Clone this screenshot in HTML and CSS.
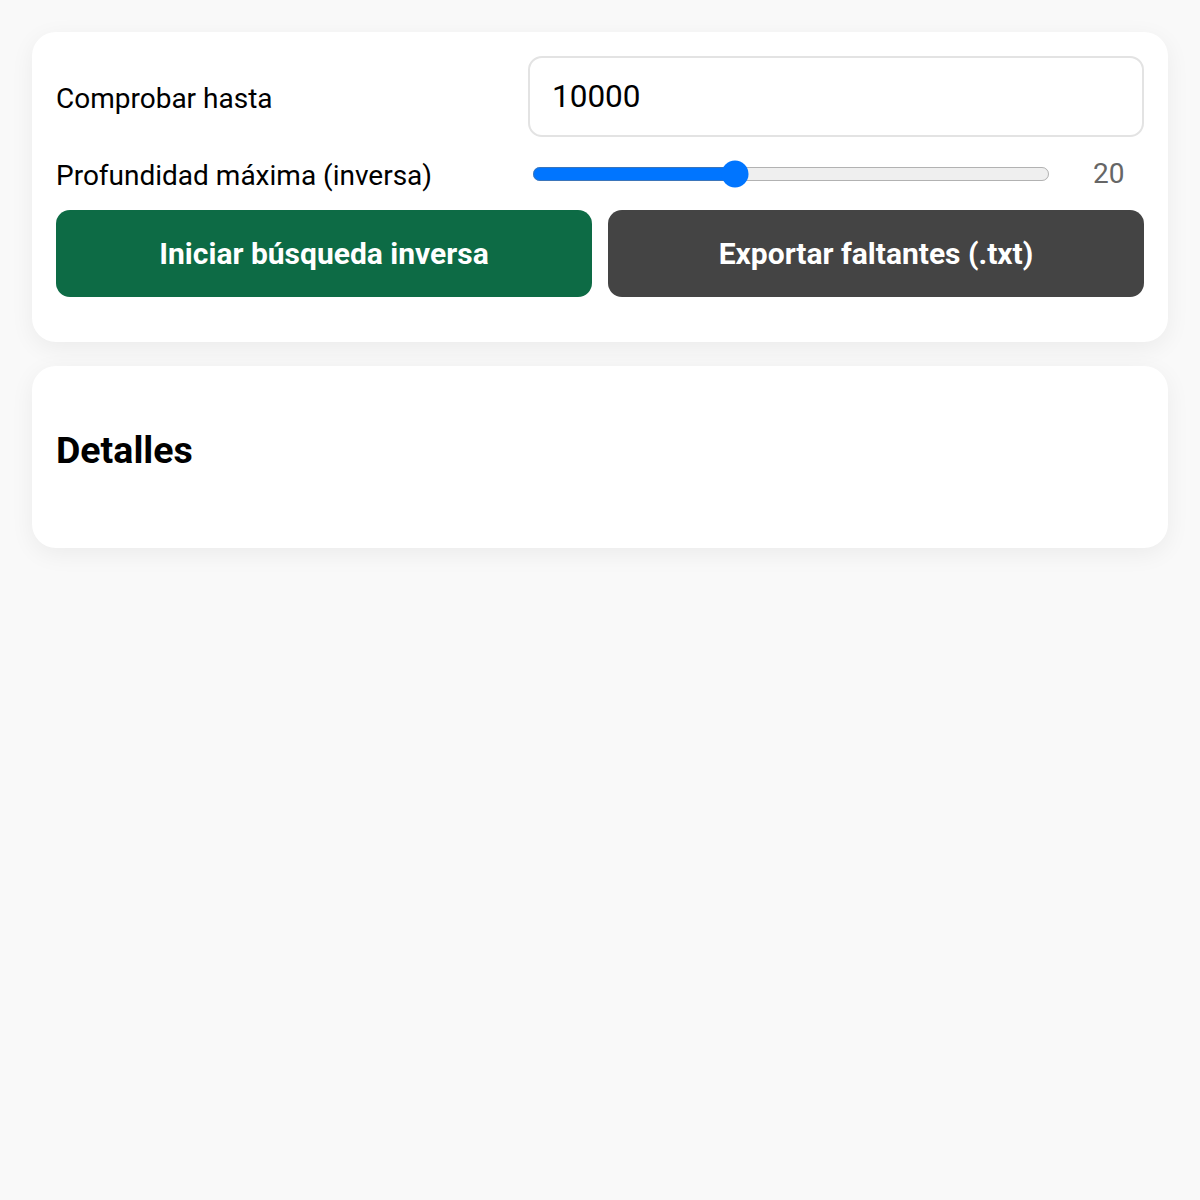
FILE: index.html
```html
<!DOCTYPE html>
<html lang="es">
  <head>
    <title>Búsqueda inversa</title>
    <meta charset="utf-8" />
    <link rel="stylesheet" href="styles.css">
  </head>
  <body>
    <div class="card controls">
      <div class="form">
        <label for="limit">Comprobar hasta</label>
        <input id="limit" class="field" type="number" value="10000" />

        <label for="depth">Profundidad máxima (inversa)</label>
        <div class="range-row">
          <input id="depth" class="range" type="range" min="1" max="50" value="20" />
          <span class="range-value">20</span>
        </div>
      </div>

      <div class="actions">
        <button class="btn btn-start">Iniciar búsqueda inversa</button>
        <button class="btn btn-export">Exportar faltantes (.txt)</button>
      </div>
    </div>

    <div class="card details">
      <h2>Detalles</h2>
      <div id="output"></div>
    </div>
  </body>
</html>
```

FILE: styles.css
```css
body {
  margin: 0;
  padding: 32px;
  background-color: #f9f9f9;
  color: #000;
  font-family: Roboto, "Noto Sans", sans-serif;
  font-size: 28px;
}

.card {
  background: #fff;
  border-radius: 24px;
  box-shadow: 0 6px 24px rgba(0, 0, 0, 0.06);
  padding: 24px;
}

.controls {
  padding-bottom: 45px;
}

.details {
  margin-top: 24px;
}

.form {
  display: grid;
  grid-template-columns: 456px 1fr;
  column-gap: 16px;
  row-gap: 16px;
  align-items: center;
}

.form label {
  padding-top: 3px;
}

.field {
  box-sizing: border-box;
  height: 81px;
  width: 100%;
  margin: 0;
  padding: 0 22px;
  border: 2px solid #e3e3e3;
  border-radius: 14px;
  font-family: Roboto, sans-serif;
  font-size: 31.5px;
  color: #000;
  outline: none;
  -moz-appearance: textfield;
}

.field::-webkit-inner-spin-button,
.field::-webkit-outer-spin-button {
  -webkit-appearance: none;
  margin: 0;
}

.range-row {
  display: flex;
  align-items: center;
  height: 41px;
}

.range {
  zoom: 1.75;
  flex: 1;
  min-width: 0;
}

.range-value {
  width: 51px;
  margin-left: 40px;
  color: #666;
}

.actions {
  display: grid;
  grid-template-columns: 1fr 1fr;
  gap: 16px;
  margin-top: 16px;
}

.btn {
  height: 87px;
  border: 0;
  border-radius: 14px;
  color: #fff;
  font-family: Roboto, sans-serif;
  font-size: 30px;
  font-weight: 700;
  cursor: pointer;
}

.btn-start {
  background: #0d6b45;
}

.btn-export {
  background: #444;
}

h2 {
  margin: 39px 0 0;
  font-size: 37.5px;
  font-weight: 700;
  line-height: 43px;
}

#output {
  height: 52px;
}
```
